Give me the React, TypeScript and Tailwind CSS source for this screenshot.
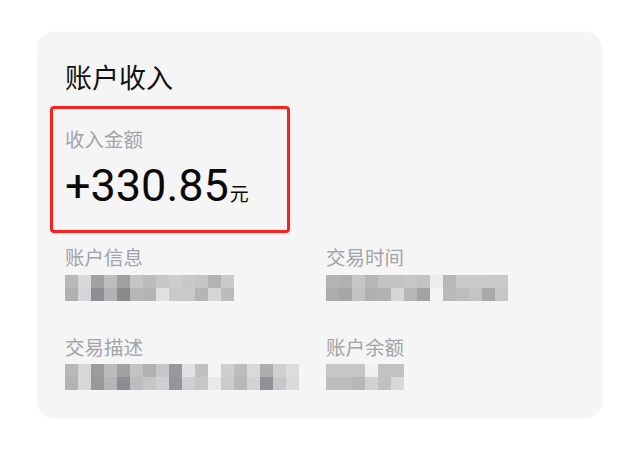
const FONT = "font-['Roboto','Noto_Sans_CJK_SC',sans-serif]";

// mosaic cells, two rows each
const ACCOUNT = [
  ["bg-[#b9b9bb]", "bg-[#d8d8da]", "bg-[#a2a2a4]", "bg-[#bdbdbf]", "bg-[#a0a0a2]", "bg-[#c5c5c7]", "bg-[#bcbcbe]", "bg-[#c7c7c9]", "bg-[#cdcdd0]", "bg-[#c8c8ca]", "bg-[#c5c5c7]", "bg-[#b3b3b5]", "bg-[#cacacc]"],
  ["bg-[#b0b0b2]", "bg-[#d5d5d7]", "bg-[#8e8e94]", "bg-[#b2b2b4]", "bg-[#8a8a8c]", "bg-[#b6b6b8]", "bg-[#b4b4b6]", "bg-[#e0e0e2]", "bg-[#c9c9cb]", "bg-[#c9c9cb]", "bg-[#b5b5b7]", "bg-[#d5d5d7]", "bg-[#bcbcbe]"],
];

const TIME = [
  ["bg-[#b4b4b6]", "bg-[#b1b1b3]", "bg-[#c6c6c8]", "bg-[#b6b6b8]", "bg-[#c3c3c5]", "bg-[#c3c3c5]", "bg-[#c6c6c8]", "bg-[#c3c3c5]", "bg-[#ececee]", "bg-[#b8b8ba]", "bg-[#cacacc]", "bg-[#cacacc]", "bg-[#c9c9cb]", "bg-[#c9c9cb]"],
  ["bg-[#acacae]", "bg-[#a6a6a8]", "bg-[#c2c2c4]", "bg-[#b0b0b2]", "bg-[#b3b3b5]", "bg-[#d6d6d8]", "bg-[#b7b7b9]", "bg-[#a3a3a5]", "bg-[#f4f4f5]", "bg-[#b9b9bb]", "bg-[#bdbdbf]", "bg-[#c4c4c6]", "bg-[#a9a9ab]", "bg-[#c6c6c8]"],
];

const DESC = [
  ["bg-[#b9b9bb]", "bg-[#d8d8da]", "bg-[#9c9c9f]", "bg-[#bcbcbe]", "bg-[#a1a1a4]", "bg-[#c3c3c5]", "bg-[#b1b1b3]", "bg-[#c7c7c9]", "bg-[#98989b]", "bg-[#e2e2e4]", "bg-[#c1c1c3]", "bg-[#f4f4f5]", "bg-[#cfcfd1]", "bg-[#bdbdbf]", "bg-[#d9d9db]", "bg-[#aeaeb0]", "bg-[#cfcfd1]", "bg-[#dcdcde]"],
  ["bg-[#b3b3b5]", "bg-[#d8d8da]", "bg-[#98989b]", "bg-[#b5b5b7]", "bg-[#8c8c93]", "bg-[#bdbdbf]", "bg-[#c6c6c8]", "bg-[#cfcfd1]", "bg-[#96969a]", "bg-[#cfcfd1]", "bg-[#c6c6c8]", "bg-[#e9e9eb]", "bg-[#cacacc]", "bg-[#b8b8ba]", "bg-[#d3d3d5]", "bg-[#909096]", "bg-[#c8c8ca]", "bg-[#dadadc]"],
];

const BALANCE = [
  ["bg-[#c6c6c8]", "bg-[#c6c6c8]", "bg-[#c6c6c8]", "bg-[#f0f0f2]", "bg-[#c2c2c4]", "bg-[#c2c2c4]"],
  ["bg-[#bdbdbf]", "bg-[#bdbdbf]", "bg-[#b7b7b9]", "bg-[#d2d2d4]", "bg-[#c0c0c2]", "bg-[#d8d8da]"],
];

function Mosaic({ rows }: { rows: string[][] }) {
  return (
    <div className="mt-[6px] flex flex-col">
      {rows.map((row, i) => (
        <div key={i} className="flex">
          {row.map((c, j) => (
            <div key={j} className={`h-[13px] w-[13px] ${c}`} />
          ))}
        </div>
      ))}
    </div>
  );
}

function Field({ label, rows }: { label: string; rows: string[][] }) {
  return (
    <div className="flex flex-col">
      <p className="text-[19.5px] leading-none text-[#a3a3a8]">{label}</p>
      <Mosaic rows={rows} />
    </div>
  );
}

export default function App() {
  return (
    <div className={`h-[450px] w-[640px] bg-white pl-[37px] pt-[32px] ${FONT}`}>
      <div className="h-[386px] w-[565px] rounded-[18px] bg-[#f5f5f6] pl-[28px] pt-[34px] shadow-[0_0_3px_rgba(0,0,0,0.04)]">
        <h1 className="text-[27px] leading-none font-normal text-[#111]">账户收入</h1>

        {/* highlighted amount */}
        <div className="-ml-[15px] mt-[13px] h-[127px] w-[240px] rounded-[4px] border-[3px] border-[#ff1f1f] pl-[12px] pt-[22px]">
          <p className="text-[19.5px] leading-none text-[#a3a3a8]">收入金额</p>
          <p className="mt-[12px] flex items-baseline leading-none text-[#0a0a0a]">
            <span className="text-[45px] leading-none">+330.85</span>
            <span className="ml-[1px] text-[19px] leading-none">元</span>
          </p>
        </div>

        <div className="mt-[16px] grid w-[522px] grid-cols-[261px_261px] gap-y-[38px]">
          <Field label="账户信息" rows={ACCOUNT} />
          <Field label="交易时间" rows={TIME} />
          <Field label="交易描述" rows={DESC} />
          <Field label="账户余额" rows={BALANCE} />
        </div>
      </div>
    </div>
  );
}
